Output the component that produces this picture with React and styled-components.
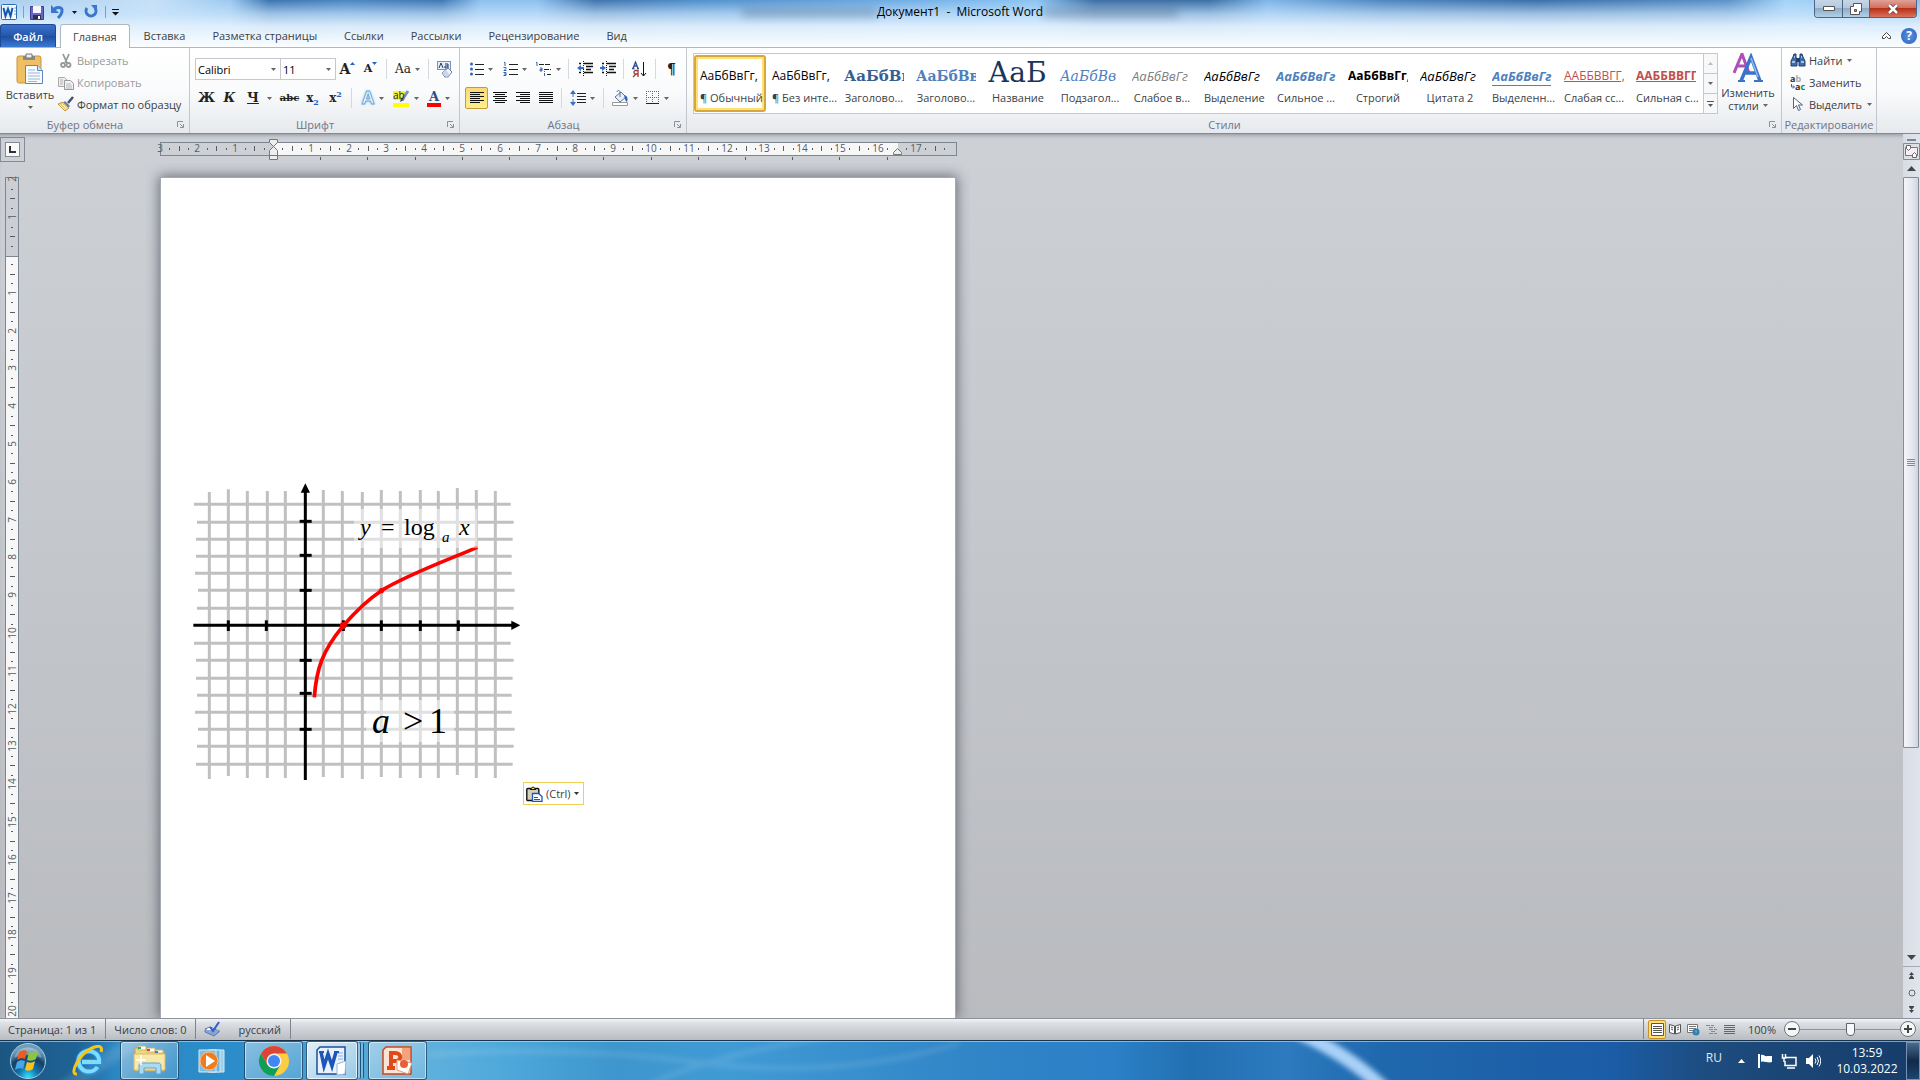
import React from "react";
import styled, { createGlobalStyle, css } from "styled-components";

const tabs = [
  "Вставка",
  "Разметка страницы",
  "Ссылки",
  "Рассылки",
  "Рецензирование",
  "Вид",
];

const styles = [
  { label: "¶ Обычный", sample: "АаБбВвГг,", active: true },
  { label: "¶ Без инте...", sample: "АаБбВвГг," },
  { label: "Заголово...", sample: "АаБбВв", serif: true, bold: true, color: "#365f91", size: 15 },
  { label: "Заголово...", sample: "АаБбВв", serif: true, bold: true, color: "#4f81bd", size: 14 },
  { label: "Название", sample: "АаБ", serif: true, color: "#17365d", size: 28 },
  { label: "Подзагол...", sample: "АаБбВв", serif: true, italic: true, color: "#4f81bd", size: 14 },
  { label: "Слабое в...", sample: "АаБбВвГг", italic: true, color: "#808080", size: 13 },
  { label: "Выделение", sample: "АаБбВвГг", italic: true, size: 13 },
  { label: "Сильное ...", sample: "АаБбВвГг", italic: true, bold: true, color: "#4f81bd", size: 13 },
  { label: "Строгий", sample: "АаБбВвГг,", bold: true },
  { label: "Цитата 2", sample: "АаБбВвГг", italic: true, size: 13 },
  { label: "Выделенн...", sample: "АаБбВвГг", italic: true, bold: true, color: "#4f81bd", size: 13, line: true },
  { label: "Слабая сс...", sample: "ААББВВГГ,", color: "#c0504d", underline: true },
  { label: "Сильная с...", sample: "ААББВВГГ,", color: "#c0504d", bold: true, underline: true },
];

const CM = 37.8;

/* ---------- icons ---------- */

const Icon = ({ w = 16, h = 16, children }) => (
  <svg width={w} height={h} viewBox={`0 0 ${w} ${h}`} aria-hidden="true">
    {children}
  </svg>
);

const Arrow = ({ color = "#666" }) => (
  <Icon w={5} h={3}>
    <path d="M0 0h5L2.500 3z" fill={color} />
  </Icon>
);

const WordBadge = () => (
  <Icon>
    <rect x=".5" y=".5" width="15" height="15" rx="1" fill="#fff" stroke="#2a6bb5" />
    <path d="M2 2h10v12H2z" fill="#e3effb" />
    <path d="M2.500 4l2 8 2.500-7 2.500 7 2-8" fill="none" stroke="#1258b0" strokeWidth="2" />
    <path d="M13 4h2M13 7h2M13 10h2" stroke="#6fa5de" />
  </Icon>
);

const SaveIcon = () => (
  <Icon w={14} h={15}>
    <path d="M.5 1.500h13v13H.5z" fill="#6a66c4" stroke="#3e3a8c" />
    <path d="M3 1h8v7H3z" fill="#f4f6fd" />
    <path d="M3 10h8v4H3z" fill="#2f2f4f" />
    <path d="M8 11h2v3H8z" fill="#fff" />
  </Icon>
);

const UndoIcon = () => (
  <Icon>
    <path d="M4 6c2-4 9-3 8 1 0 3-2 5-4 7" fill="none" stroke="#3a76cc" strokeWidth="3" />
    <path d="M1 1v8h8z" fill="#3a76cc" />
  </Icon>
);

const RedoIcon = () => (
  <Icon>
    <path d="M4 4a5 5 0 1 0 8 0" fill="none" stroke="#3a76cc" strokeWidth="3" />
    <path d="M8 1h6v7z" fill="#3a76cc" />
  </Icon>
);

const PasteIcon = () => (
  <Icon w={28} h={32}>
    <rect x="1" y="3" width="24" height="27" rx="2" fill="#efbf63" stroke="#c9953c" />
    <path d="M7 3h12v4H7z" fill="#8a8a8a" />
    <path d="M10 1h6v4h-6z" fill="#eee" stroke="#777" />
    <path d="M9.500 12.500h12l5 5v13h-17z" fill="#f7fbff" stroke="#5f87b8" />
    <path d="M21.500 12.500v5h5" fill="#d5e3f3" stroke="#5f87b8" />
    <path d="M12 17h7M12 20h12M12 23h12M12 26h12M12 28.500h9" stroke="#9db6d4" />
  </Icon>
);

const CutIcon = () => (
  <Icon>
    <path d="M5 1l4 9M11 1L7 10" stroke="#999" strokeWidth="1.800" />
    <circle cx="5" cy="12" r="2" fill="none" stroke="#999" strokeWidth="1.800" />
    <circle cx="10.500" cy="12" r="2" fill="none" stroke="#999" strokeWidth="1.800" />
  </Icon>
);

const CopyIcon = () => (
  <Icon>
    <path d="M.5 2.500h6l3 3v6h-9z" fill="#eee" stroke="#aaa" />
    <path d="M6.500 5.500h6l3 3v6h-9z" fill="#f4f4f4" stroke="#999" />
    <path d="M2 5h3M2 7h3M2 9h3M8 9h5M8 11h6M8 13h6" stroke="#b5b5b5" />
  </Icon>
);

const BrushIcon = () => (
  <Icon>
    <path d="M15 1l-5 6" stroke="#44506e" strokeWidth="2.500" />
    <path d="M7 5l5 5-2 2-5-5z" fill="#6b7ba5" />
    <path d="M0 8l5-2 6 6-4 3z" fill="#f2cf6b" stroke="#b58a2d" strokeWidth=".8" />
    <path d="M2 9l5 5M4 8l5 5" stroke="#fff3c4" />
  </Icon>
);

const LauncherIcon = () => (
  <Icon w={7} h={7}>
    <path d="M.5 6V.5H6" fill="none" stroke="#8b9099" />
    <path d="M3 3l3 3M6.500 3v3.500H3" fill="none" stroke="#8b9099" />
  </Icon>
);

const EraserIcon = () => (
  <Icon w={18} h={18}>
    <rect x="1.500" y="1.500" width="13" height="8" fill="#e6eef9" stroke="#7a93b8" />
    <path d="M3 8l2-5 2 5M9 4h3v4H9V6h3" fill="none" stroke="#22396b" />
    <path d="M6 13l6-5 4 4-4 5H9z" fill="#f1f5fb" stroke="#6d83a5" />
    <path d="M6 13l4-3 3 4-2 3" fill="#c9d6ea" />
  </Icon>
);

const MarkerIcon = () => (
  <Icon w={17} h={17}>
    <path d="M0 1h12v9H0z" fill="#f6ef3a" />
    <path d="M15 1l-6 9" stroke="#7b93bb" strokeWidth="3" />
    <path d="M8 8l3 2-4 2z" fill="#3b4a68" />
    <path d="M0 13h16v4H0z" fill="#ff0" />
    <text x="0" y="9" fontSize="10" fontFamily="Open Sans, sans-serif" fill="#222">ab</text>
  </Icon>
);

const Bullets = () => (
  <Icon w={14} h={14}>
    <path d="M5 2.500h9M5 7.500h9M5 12.500h9" stroke="#222" />
    <circle cx="1.500" cy="2" r="1.500" fill="#3561b5" />
    <circle cx="1.500" cy="7" r="1.500" fill="#3561b5" />
    <circle cx="1.500" cy="12" r="1.500" fill="#3561b5" />
  </Icon>
);

const Numbers = () => (
  <Icon w={15} h={16}>
    <path d="M6 3.500h9M6 8.500h9M6 13.500h9" stroke="#222" />
    <path d="M1 1.500h1V5M.5 6.500H3v1L1 9.500h2.500M.5 11.500H3v3H.5M1 13h2" fill="none" stroke="#3561b5" />
  </Icon>
);

const MultiLevel = () => (
  <Icon w={17} h={16}>
    <path d="M4 3.500h12M9 8.500h7M12 13.500h4" stroke="#222" strokeDasharray="5 1" />
    <path d="M1 1.500h1V5M5 7h2v3H5V8.500h2M9.500 12v3M9.500 10v1" fill="none" stroke="#3561b5" />
  </Icon>
);

const Indent = ({ out }) => (
  <Icon>
    <path d="M7 2.500h9M9 5.500h7M9 8.500h5M7 11.500h9M2 2.500h2M2 11.500h2" stroke="#111" strokeWidth="1.500" />
    <path d="M6.500 0v16" stroke="#111" strokeDasharray="1 1" />
    <path d={out ? "M0 7l4-3v2h3v2H4v2z" : "M6 7L2 4v2H0v2h2v2z"} fill="#3a6cc8" />
  </Icon>
);

const SortIcon = () => (
  <Icon w={15} h={17}>
    <path d="M1 7.500L3.500 1 6 7.500M2 5h3M0 7.500h2.500M5 7.500h2" fill="none" stroke="#2d4f95" strokeWidth="1.300" />
    <path d="M6 16V9.500H3a2 2 0 0 0 0 3.500h3M4 13l-3 3" fill="none" stroke="#9c3a34" strokeWidth="1.300" />
    <path d="M11.500 1v14M9 12l2.500 3 2.500-3" fill="none" stroke="#111" />
  </Icon>
);

const AlignIcon = ({ short }) => {
  const edges = { left: [0, 10], center: [2, 12], right: [4, 14], full: [0, 14] }[short];
  return (
    <Icon w={14} h={12}>
      <path d="M0 .5h14M0 4.500h14M0 8.500h14" stroke="#111" />
      <path
        d={`M${edges[0]} 2.500H${edges[1]}M${edges[0]} 6.500H${edges[1]}M${edges[0]} 10.500H${edges[1]}`}
        stroke="#111"
      />
    </Icon>
  );
};

const SpacingIcon = () => (
  <Icon>
    <path d="M7 3.500h9M7 6.500h9M7 9.500h9M7 12.500h9" stroke="#222" />
    <path d="M3 0l3 4H0zM3 16l3-4H0z" fill="#3a6cc8" />
    <path d="M3 3v10" stroke="#3a6cc8" strokeDasharray="4 2" />
  </Icon>
);

const BucketIcon = () => (
  <Icon w={17} h={16}>
    <path d="M3 7l6-5 5 5-6 5z" fill="#e8eef8" stroke="#5f7396" />
    <path d="M8 7V2c0-2-3-2-3 0" fill="none" stroke="#5f7396" />
    <path d="M12 5c4 1 4 4 3 7-2-1-2-3-3-7z" fill="#2e67b5" />
    <path d="M.5 12.500h15v3H.5z" fill="#fff" stroke="#999" />
  </Icon>
);

const BordersIcon = () => (
  <Icon w={14} h={14}>
    <path d="M.5 0v12M6.500 0v12M12.500 0v12M0 .5h13M0 6.500h13" stroke="#666" strokeDasharray="1 1" />
    <path d="M0 12.500h13" stroke="#222" />
  </Icon>
);

const ChangeStylesIcon = () => (
  <Icon w={30} h={30}>
    <path d="M1 20L9 1l7 19M5 13h8" fill="none" stroke="#ad4eb9" strokeWidth="3" />
    <path d="M8 28L18 4l9 24M12 20h12" fill="none" stroke="#3973ca" strokeWidth="3.500" />
    <path d="M5 28h7M21 28h9" stroke="#3973ca" strokeWidth="2" />
    <path d="M18 5l7 19" stroke="#91b9f2" strokeWidth="1.500" />
  </Icon>
);

const FindIcon = () => (
  <Icon>
    <path d="M3 4l1-3h2v3l1 3v6H1V8zM13 4l-1-3h-2v3L9 7v6h6V8z" fill="#3d6eb0" stroke="#233f6e" />
    <path d="M6 5h4v4H6z" fill="#233f6e" />
    <path d="M2 9h3M11 9h3M4 4h1M11 4h1" stroke="#c7dbf4" strokeWidth="1.500" />
  </Icon>
);

const ReplaceIcon = () => (
  <Icon>
    <text x="0" y="7" fontSize="9" fontWeight="700" fontFamily="Open Sans, sans-serif" fill="#333">
      a<tspan fill="#aaa">b</tspan>
    </text>
    <text x="5" y="15" fontSize="9" fontWeight="700" fontFamily="Open Sans, sans-serif" fill="#333">
      a<tspan fill="#1b8a2b">c</tspan>
    </text>
    <path d="M1.500 9v3H4M3 10.500L4.500 12 3 13.500" fill="none" stroke="#3561b5" />
  </Icon>
);

const SelectIcon = () => (
  <Icon>
    <path d="M3.500 1.500v11l3-3 2 5 2-1-2-4.500h4z" fill="#fff" stroke="#4a6286" />
  </Icon>
);

const ClipSmallIcon = () => (
  <Icon w={17} h={16}>
    <rect x=".8" y="2.500" width="12" height="12" rx="1" fill="#d8d0bb" stroke="#111" strokeWidth="1.400" />
    <path d="M4 3.500L7 .8l3 2.700z" fill="#ffd94a" stroke="#111" />
    <path d="M6.500 7.500h6l3.500 3v5H6.500z" fill="#fff" stroke="#1b56c9" strokeWidth="1.300" />
    <path d="M8 11.500h4M8 13.500h6" stroke="#1b56c9" />
  </Icon>
);

const ProofIcon = () => (
  <Icon w={17} h={16}>
    <path d="M1 8l5-2 9 4-5 4z" fill="#fff" stroke="#5d78b5" />
    <path d="M1 9v2l9 4 5-4v-2" fill="#8da3d3" stroke="#5d78b5" />
    <path d="M6 6l3 4 6-9" fill="none" stroke="#2d62c4" strokeWidth="2" />
  </Icon>
);

const PageView = () => (
  <Icon w={13} h={13}>
    <path d="M.5.500h12v12H.5z" fill="#fff" stroke="#555" />
    <path d="M2 3.500h9M2 5.500h9M2 7.500h9M2 9.500h9" stroke="#555" />
  </Icon>
);

const ReadView = () => (
  <Icon w={12} h={13}>
    <path d="M.5 1.500L5.500 3v8L.5 9.500zM11.500 1.500L6.500 3v8l5-1.500z" fill="#fff" stroke="#555" />
    <path d="M2 4l2 1M2 6l2 1M10 4L8 5M10 6L8 7" stroke="#555" />
  </Icon>
);

const WebView = () => (
  <Icon w={13} h={13}>
    <path d="M.5 1.500h10v8H.5z" fill="#fff" stroke="#777" />
    <path d="M2 3.500h7M2 5.500h7M2 7.500h4" stroke="#777" />
    <circle cx="9" cy="9" r="3.500" fill="#2c7fb8" />
    <path d="M8 7l2 1-1 3z" fill="#6fc36f" />
  </Icon>
);

const OutlineView = () => (
  <Icon w={11} h={11}>
    <path d="M0 1.500h8M3 3.500h6M3 5.500h8M5 7.500h5M3 9.500h8" stroke="#888" strokeDasharray="4 1" />
  </Icon>
);

const DraftView = () => (
  <Icon w={11} h={11}>
    <path d="M0 1.500h11M0 3.500h11M0 5.500h11M0 7.500h11M0 9.500h11" stroke="#666" />
  </Icon>
);

const StartOrb = () => (
  <Icon w={38} h={38}>
    <defs>
      <radialGradient id="orb" cx="50%" cy="95%" r="80%">
        <stop offset="0" stopColor="#2be3ff" />
        <stop offset=".35" stopColor="#1474ad" />
        <stop offset=".7" stopColor="#123f66" />
        <stop offset="1" stopColor="#6f9dbb" />
      </radialGradient>
    </defs>
    <circle cx="19" cy="19" r="17.500" fill="url(#orb)" stroke="#a9cbe2" />
    <path d="M5 16a14.500 14.500 0 0 1 28 0c-9-4-19-4-28 0z" fill="#fff" opacity=".3" />
    <path d="M10 10c3-2 6-2 8-1l-2 8c-2-1-5-1-8 1z" fill="#ee5a24" />
    <path d="M20 10c3 1 5 1 9-1l-2 8c-3 2-6 2-9 1z" fill="#8cc63f" />
    <path d="M8 20c3-2 5-2 8-1l-2 8c-2-1-5-1-8 1z" fill="#45a8e6" />
    <path d="M18 20c3 1 5 1 8-1l-2 8c-3 2-5 2-8 1z" fill="#fcc21b" />
  </Icon>
);

const IeIcon = () => (
  <Icon w={32} h={32}>
    <path d="M26 22a10.500 10.500 0 1 1 1.500-5H10" fill="none" stroke="#2b93dd" strokeWidth="6" />
    <path d="M25.500 22a10.300 10.300 0 1 1 1.700-5H10" fill="none" stroke="#7fdcfd" strokeWidth="4" />
    <path d="M5 29C-4 30 8 8 20 3c7-3 11-2 9 4" fill="none" stroke="#f5c518" strokeWidth="3" />
  </Icon>
);

const FolderIcon = () => (
  <Icon w={34} h={32}>
    <path d="M2 3h11l2 3h16v20H2z" fill="#f0d786" stroke="#c9a54b" />
    <path d="M5 1h8v4H5zM14 3h8v4h-8zM22 5h8v3h-8z" fill="#fff" stroke="#c9b067" />
    <path d="M5 2h3v2H5z" fill="#2eae4e" />
    <path d="M14 4h3v2h-3z" fill="#d9432f" />
    <path d="M22 6h3v2h-3z" fill="#2e86d9" />
    <path d="M1 9h31v16H1z" fill="#f9e9a9" stroke="#d9ba62" />
    <path d="M6 29v-8c0-2 1-3 3-3h16c2 0 3 1 3 3v8h-5v-6H11v6z" fill="#a8dbf3" stroke="#5aa5cf" />
    <path d="M8 10v10M3 15h10" stroke="#fff" strokeWidth="1.500" />
  </Icon>
);

const PlayerIcon = () => (
  <Icon w={28} h={26}>
    <path d="M12 2h14v22H12z" fill="#9fd0ea" stroke="#cfe9f6" />
    <path d="M10 2h12v22H10z" fill="#6db3dc" stroke="#cfe9f6" />
    <path d="M1 2h17v22H1z" fill="#7fbde2" stroke="#d7ecf8" />
    <circle cx="11" cy="13" r="9" fill="#f07c1c" stroke="#fbc08b" />
    <path d="M8 7l9 6-9 6z" fill="#fff" />
  </Icon>
);

const ChromeIcon = () => (
  <Icon w={32} h={32}>
    <circle cx="16" cy="16" r="15" fill="#ffcd42" />
    <path d="M16 16L9.500 19.800 3 8.500A15 15 0 0 0 16 31l6.500-11.300z" fill="#0f9d58" />
    <path d="M3 8.500A15 15 0 0 1 29 8.500H16l-6.500 11.300z" fill="#db4437" />
    <circle cx="16" cy="16" r="7.500" fill="#f5f5f5" />
    <circle cx="16" cy="16" r="6" fill="#4285f4" />
  </Icon>
);

const WordIcon = () => (
  <Icon w={32} h={32}>
    <path d="M4 2h25v27H1V5z" fill="#e9f1fb" stroke="#1c4f9c" strokeWidth="1.500" />
    <path d="M22 8h5M22 11h5M22 14h5" stroke="#89aee0" />
    <path d="M5 7l3 14 4-12 4 12 4-14" fill="none" stroke="#1b56b8" strokeWidth="3.500" />
    <path d="M3 7h5M18 7h5" stroke="#1b56b8" strokeWidth="2" />
    <path d="M21 19l9-3-1 13-8 1z" fill="#fff" stroke="#9ab5dc" />
  </Icon>
);

const PowerPointIcon = () => (
  <Icon w={32} h={32}>
    <path d="M4 2h25v27H1V5z" fill="#fbe3d6" stroke="#c9471b" strokeWidth="1.500" />
    <path d="M20 3h8v12h-8z" fill="#f3a47e" />
    <path d="M9 23V8h4c7 0 7 8 0 8H9M5 23h8" fill="none" stroke="#df4a16" strokeWidth="4" />
    <path d="M15 15l15 3-4 11-11-4z" fill="#fff" stroke="#e29a7b" />
    <circle cx="22" cy="19" r="4" fill="#e8603a" />
  </Icon>
);

const TrayFlag = () => (
  <Icon>
    <path d="M2 1v14" stroke="#fff" strokeWidth="2" />
    <path d="M4 2c3-1 4 2 6 1h5v6c-3 1-4 0-6 0s-3-1-5 0z" fill="#fff" />
  </Icon>
);

const TrayNetwork = () => (
  <Icon>
    <path d="M5 4.500h10v8H4V8" fill="#20466f" stroke="#fff" strokeWidth="1.500" />
    <path d="M1.500 1v4h3V1M3 5v4M6 15h8" fill="none" stroke="#fff" strokeWidth="1.500" />
  </Icon>
);

const TraySound = () => (
  <Icon>
    <path d="M1 5h3l4-4v14l-4-4H1z" fill="#fff" />
    <path d="M10 5.500q2 2.500 0 5M12 4q3 4 0 8M14 2.500q3.500 5.500 0 11" fill="none" stroke="#fff" />
  </Icon>
);

/* ---------- styled parts ---------- */

const GlobalStyle = createGlobalStyle`
  * {
    box-sizing: border-box;
  }
  body {
    margin: 0;
    font-family: "Open Sans", "Noto Sans", sans-serif;
    font-size: 11px;
    color: #3b3f46;
  }
  button, select, input {
    font: inherit;
    color: inherit;
    margin: 0;
    padding: 0;
    border: 0;
    background: none;
  }
  svg {
    display: block;
    flex: none;
  }
`;

const Window = styled.div`
  display: flex;
  flex-direction: column;
  height: 100vh;
  overflow: hidden;
`;

const Top = styled.header`
  background: linear-gradient(
      to bottom,
      rgba(214, 234, 252, 0) 0,
      rgba(200, 228, 252, 0.7) 14px,
      rgba(225, 240, 253, 0.95) 26px,
      #fbfdff 47px
    ),
    linear-gradient(
      to right,
      #a9cdee 0%,
      #c6e0f6 8%,
      #9cc9f0 12%,
      #3b75b0 14%,
      #4a86c4 18%,
      #3f78b4 23%,
      #8cc0ee 25%,
      #8cc0ee 28%,
      #3f74ac 31%,
      #4f8ecb 36%,
      #69a8e2 45%,
      #8cc4f3 54%,
      #3c70a6 57%,
      #3c70a6 63%,
      #7fb6e8 66%,
      #4f86bf 72%,
      #3a6fa8 80%,
      #5c92c8 90%,
      #a3d3f8 93%,
      #8fc0ea 100%
    );
`;

const TitleBar = styled.div`
  display: grid;
  grid-template-columns: 1fr auto 1fr;
  height: 24px;
`;

const QuickAccess = styled.div`
  display: flex;
  align-items: center;
  gap: 6px;
  padding: 0 1px;
`;

const Divider = styled.span`
  width: 1px;
  height: 12px;
  background: #8d9bac;
`;

const IconButton = styled.button`
  display: flex;
  align-items: center;
  justify-content: center;
`;

const Title = styled.h1`
  position: relative;
  margin: 0;
  font-size: 12px;
  font-weight: 400;
  line-height: 24px;
  white-space: pre;
  color: #000;
  &::before,
  &::after {
    content: "";
    position: absolute;
    top: 8px;
    width: 135px;
    height: 9px;
    background: rgba(70, 95, 125, 0.35);
    filter: blur(4px);
  }
  &::before {
    right: 100%;
  }
  &::after {
    left: 100%;
  }
`;

const WindowButtons = styled.div`
  display: flex;
  justify-self: end;
  align-self: start;
  height: 18px;
  margin-right: 3px;
  border: 1px solid #4a6585;
  border-top: 0;
  border-radius: 0 0 4px 4px;
  overflow: hidden;
`;

const WindowButton = styled.button`
  display: flex;
  align-items: center;
  justify-content: center;
  width: ${(props) => (props.$close ? 47 : 27)}px;
  background: ${(props) =>
    props.$close
      ? "linear-gradient(#e0a196, #cf6a58 50%, #b8301a 50%, #d9735c)"
      : "linear-gradient(#c5d6e6, #b4c8dc 50%, #8fabc6 50%, #b3d0e8)"};
  & + & {
    border-left: 1px solid #4a6585;
  }
`;

const TabRow = styled.nav`
  display: flex;
  align-items: flex-end;
  height: 24px;
  border-bottom: 1px solid #b1b7c0;
`;

const Tab = styled.button`
  height: 23px;
  padding: 0 14px 0 13px;
  ${(props) =>
    props.$active &&
    css`
      height: 24px;
      margin: 0 1px -1px 4px;
      padding: 0 12px;
      border: 1px solid #b1b7c0;
      border-bottom: 0;
      border-radius: 3px 3px 0 0;
      background: #fff;
    `}
  ${(props) =>
    props.$file &&
    css`
      width: 56px;
      padding: 0;
      border: 1px solid #1c4a94;
      border-bottom: 0;
      border-radius: 3px 3px 0 0;
      background: linear-gradient(#3b72cd, #2557a8 50%, #1d4c9c 50%, #3a7ad4);
      color: #fff;
      font-weight: 600;
    `}
`;

const TabTools = styled.div`
  display: flex;
  align-items: center;
  gap: 10px;
  height: 23px;
  margin-left: auto;
  padding-right: 3px;
`;

const Help = styled.button`
  width: 16px;
  height: 16px;
  border-radius: 50%;
  background: radial-gradient(#5a92e4, #2b5fb8);
  color: #fff;
  font-size: 12px;
  font-weight: 700;
  line-height: 16px;
`;

const Ribbon = styled.section`
  display: flex;
  height: 86px;
  border-bottom: 1px solid #84888f;
  background: linear-gradient(#fff, #fafbfc 50%, #e6e9ed);
`;

const Group = styled.section`
  display: flex;
  flex-direction: column;
  width: ${(props) => props.$w}px;
  border-right: 1px solid #c3c7cd;
`;

const GroupBody = styled.div`
  display: flex;
  flex: 1;
  min-height: 0;
  padding: 0 5px;
`;

const GroupFooter = styled.footer`
  display: flex;
  align-items: center;
  height: 18px;
  padding-right: ${(props) => (props.$launcher ? 5 : 0)}px;
  color: #6d7583;
  span {
    flex: 1;
    padding-right: ${(props) => (props.$launcher ? 7 : 0)}px;
    text-align: center;
    white-space: nowrap;
  }
`;

const BigButton = styled.button`
  flex: none;
  display: flex;
  flex-direction: column;
  align-items: center;
  width: ${(props) => props.$w}px;
  padding-top: 5px;
  line-height: 13px;
  svg + span {
    margin-top: 3px;
  }
  > span + svg {
    margin-top: 5px;
  }
`;

const Inline = styled.span`
  display: flex;
  align-items: center;
  gap: 4px;
`;

const Stack = styled.div`
  display: flex;
  flex-direction: column;
  padding: 2px 0 0 3px;
`;

const SmallButton = styled.button`
  display: flex;
  align-items: center;
  gap: 3px;
  height: 22px;
  white-space: nowrap;
  color: ${(props) => (props.disabled ? "#9a9a9a" : "#3b3f46")};
  > span + svg {
    margin-left: 2px;
  }
`;

const Rows = styled.div`
  display: flex;
  flex-direction: column;
  gap: 7px;
  padding-top: 10px;
`;

const Row = styled.div`
  display: flex;
  align-items: center;
  height: 22px;
`;

const Combo = styled.label`
  display: flex;
  align-items: center;
  width: ${(props) => props.$w}px;
  height: 22px;
  padding: 0 4px 0 2px;
  border: 1px solid #c5c9cf;
  background: #fff;
  color: #000;
  & + & {
    border-left: 0;
  }
  select {
    flex: 1;
    min-width: 0;
    appearance: none;
    outline: 0;
  }
`;

const Tool = styled.button`
  flex: none;
  display: flex;
  align-items: center;
  justify-content: center;
  width: ${(props) => (props.$wide ? 37 : props.$split ? 33 : 23)}px;
  height: 22px;
  gap: ${(props) => (props.$wide ? 8 : 4)}px;
  color: #222;
  ${(props) =>
    props.$active &&
    css`
      border: 1px solid #c29b3c;
      border-radius: 2px;
      background: linear-gradient(#fbd977, #fee57c 50%, #fdf08b);
    `}
`;

const Separator = styled.span`
  width: 1px;
  height: 20px;
  margin: 0 4px;
  background: #d5d8dc;
`;

const Glyph = styled.span`
  font-family: "DejaVu Serif", serif;
  font-size: ${(props) => props.$size || 13}px;
  font-weight: ${(props) => (props.$light ? 400 : 700)};
  font-style: ${(props) => (props.$italic ? "italic" : "normal")};
  text-decoration: ${(props) => props.$line || "none"};
  color: ${(props) => props.$color || "#222"};
  line-height: 16px;
  sub,
  sup {
    font-size: 8px;
    line-height: 0;
    color: #2d5fb8;
  }
`;

const Caret = styled.span`
  align-self: flex-start;
  margin: 4px 0 0 -4px;
`;

const ColorGlyph = styled(Glyph)`
  border-bottom: 4px solid #f00;
  padding: 0 2px;
  line-height: 13px;
`;

const OutlineGlyph = styled.span`
  font-family: "Liberation Sans", Arial, sans-serif;
  font-size: 18px;
  line-height: 20px;
  font-weight: 700;
  color: #fff;
  -webkit-text-stroke: 1px #6aa6d8;
  text-shadow: 0 0 3px #7cc0ee;
`;

const Gallery = styled.div`
  display: flex;
  flex: 1;
  min-width: 0;
  height: 61px;
  margin: 5px 2px 0 1px;
  border: 1px solid #c5c9cf;
  background: #fff;
`;

const GalleryItems = styled.div`
  display: flex;
  flex: 1;
  min-width: 0;
  overflow: hidden;
`;

const StyleCard = styled.button`
  flex: none;
  display: flex;
  flex-direction: column;
  width: 72px;
  margin: 1px 0;
  padding: 3px 4px;
  border: 2px solid transparent;
  border-radius: 3px;
  ${(props) =>
    props.$active &&
    css`
      border-color: #d9a63c;
      box-shadow: inset 0 0 0 2px #fee278;
    `}
`;

const Sample = styled.span`
  display: block;
  width: 100%;
  height: 30px;
  overflow: hidden;
  text-align: left;
  white-space: nowrap;
  line-height: ${(props) => (props.$size > 20 ? 26 : 32)}px;
  font-family: ${(props) =>
    props.$serif ? '"DejaVu Serif", serif' : '"Open Sans", sans-serif'};
  font-size: ${(props) => props.$size || 12}px;
  font-weight: ${(props) => (props.$bold ? 700 : 400)};
  font-style: ${(props) => (props.$italic ? "italic" : "normal")};
  color: ${(props) => props.$color || "#000"};
  text-decoration: ${(props) => (props.$underline ? "underline" : "none")};
  span {
    border-bottom: ${(props) => (props.$line ? "1px solid #4f81bd" : "0")};
  }
`;

const StyleLabel = styled.span`
  width: 100%;
  text-align: center;
  white-space: nowrap;
  line-height: 15px;
`;

const GalleryArrows = styled.div`
  display: flex;
  flex: none;
  flex-direction: column;
  width: 14px;
  border-left: 1px solid #c5c9cf;
  button {
    display: flex;
    flex: 1;
    align-items: center;
    justify-content: center;
    background: #f7f8f9;
  }
  button + button {
    border-top: 1px solid #c5c9cf;
  }
`;

const Workspace = styled.main`
  display: flex;
  flex: 1;
  min-height: 0;
  background: linear-gradient(#cdd0d5, #c4c7cc 45%, #b9bbbf);
  box-shadow: inset 0 4px 4px -3px #8d9198;
`;

const Left = styled.div`
  display: flex;
  flex: none;
  flex-direction: column;
  width: 25px;
`;

const TabStop = styled.button`
  display: flex;
  flex: none;
  align-items: center;
  justify-content: center;
  height: 25px;
  margin: 3px 0 15px;
  border: 1px solid #858b94;
  span {
    display: flex;
    align-items: center;
    justify-content: center;
    width: 15px;
    height: 15px;
    border: 1px solid #858b94;
    background: #fafafa;
  }
`;

const VerticalRuler = styled.div`
  flex: 1;
  min-height: 0;
  width: 14px;
  margin-left: 5px;
  border: 1px solid #7d8590;
  border-bottom: 0;
  background: linear-gradient(#cbced3 78px, #7d8590 78px, #7d8590 79px, #f7f7f8 79px);
  svg {
    overflow: visible;
  }
`;

const Canvas = styled.div`
  flex: 1;
  min-width: 0;
  display: flex;
  flex-direction: column;
  padding-left: 135px;
`;

const Ruler = styled.div`
  flex: none;
  width: 797px;
  height: 14px;
  margin: 8px 0 21px;
  border: 1px solid #7d8590;
  background: linear-gradient(
    to right,
    transparent 112px,
    #f7f7f8 112px,
    #f7f7f8 737px,
    transparent 737px
  );
  svg {
    overflow: visible;
    margin: -1px;
  }
`;

const Page = styled.article`
  position: relative;
  flex: 1;
  min-height: 0;
  width: 796px;
  padding: 302px 0 0 29px;
  border: 1px solid #a4aab5;
  border-bottom: 0;
  background: #fff;
  box-shadow: 0 0 12px 1px rgba(60, 65, 75, 0.7);
  clip-path: inset(-14px -14px 0 -14px);
`;

const PasteOptions = styled.button`
  position: absolute;
  left: 362px;
  top: 604px;
  display: flex;
  align-items: center;
  gap: 3px;
  width: 61px;
  height: 23px;
  padding: 0 2px;
  border: 1px solid #efcf55;
  background: #fff;
`;

const ScrollBar = styled.aside`
  display: flex;
  flex: none;
  flex-direction: column;
  align-items: center;
  width: 17px;
  padding-top: 5px;
  background: linear-gradient(to right, #d8dce4, #e0e4ec);
  button {
    display: flex;
    flex: none;
    align-items: center;
    justify-content: center;
    width: 17px;
    height: 17px;
  }
`;

const SplitHandle = styled.span`
  flex: none;
  width: 9px;
  height: 2px;
  margin-bottom: 2px;
  background: #80858d;
`;

const Track = styled.div`
  flex: 1;
  width: 100%;
`;

const Thumb = styled.div`
  display: flex;
  align-items: center;
  justify-content: center;
  width: 16px;
  height: 74%;
  border: 1px solid #868c95;
  border-radius: 1px;
  background: linear-gradient(to right, #f3f5f9, #e4e7ee 60%, #cfd4dd);
`;

const BrowseButtons = styled.div`
  border-top: 1px solid #a5abb5;
`;

const StatusBar = styled.footer`
  display: flex;
  flex: none;
  align-items: flex-start;
  height: 22px;
  border-top: 1px solid #8e939b;
  background: linear-gradient(#f2f4f7, #dcdfe4 20%, #b9bdc2);
`;

const StatusItem = styled.button`
  display: flex;
  align-items: center;
  gap: 17px;
  height: 20px;
  padding: 0 9px 0 8px;
  border-right: 1px solid #7f848b;
`;

const ViewControls = styled.div`
  display: flex;
  align-items: center;
  height: 20px;
  margin-left: auto;
  padding-left: 4px;
  padding-right: 4px;
  border-left: 1px solid #7f848b;
`;

const ViewButton = styled.button`
  display: flex;
  align-items: center;
  justify-content: center;
  width: 18px;
  height: 19px;
  ${(props) =>
    props.$active &&
    css`
      border: 1px solid #c58f2c;
      border-radius: 2px;
      background: #fde27c;
    `}
`;

const ZoomText = styled.button`
  padding: 0 8px 0 10px;
`;

const ZoomButton = styled.button`
  display: flex;
  align-items: center;
  justify-content: center;
  width: 16px;
  height: 16px;
  border: 1px solid #6f757e;
  border-radius: 50%;
  background: #f5f6f8;
`;

const ZoomRange = styled.input`
  appearance: none;
  width: 100px;
  height: 14px;
  background: linear-gradient(#8f959e, #8f959e) center / 100% 1px no-repeat;
  &::-webkit-slider-thumb {
    appearance: none;
    width: 9px;
    height: 13px;
    background: #f8f9fa;
    border: 1px solid #5f656e;
    border-radius: 1px 1px 5px 5px;
  }
`;

const Taskbar = styled.footer`
  position: relative;
  display: flex;
  flex: none;
  align-items: center;
  height: 40px;
  border-top: 1px solid #18354f;
  box-shadow: inset 0 1px 0 rgba(200, 225, 245, 0.6);
  color: #fff;
  background: linear-gradient(
    to right,
    #1b5681 0%,
    #1e6396 4%,
    #2b87c3 6%,
    #2c8ecb 13%,
    #4da3d3 17%,
    #60b1dc 22%,
    #4fa9db 26%,
    #3d96cd 32%,
    #409bd5 38%,
    #3186c7 50%,
    #2b80c7 58%,
    #2270b2 62%,
    #2d7abf 67%,
    #1f68ad 72%,
    #1b5ca6 84%,
    #1d4c7e 89%,
    #163c69 100%
  );
`;

const Streaks = styled.svg`
  position: absolute;
  inset: 0;
  width: 100%;
  height: 100%;
  pointer-events: none;
`;

const TaskButton = styled.button`
  position: relative;
  display: flex;
  align-items: center;
  justify-content: center;
  width: 62px;
  height: 39px;
  ${(props) =>
    props.$open &&
    css`
      width: 59px;
      margin: 0 2px 0 1px;
      border: 1px solid rgba(20, 60, 95, 0.8);
      border-radius: 3px;
      background: linear-gradient(135deg, rgba(255, 255, 255, 0.45), rgba(255, 255, 255, 0.1));
      box-shadow: inset 0 0 0 1px rgba(255, 255, 255, 0.5);
    `}
  ${(props) =>
    props.$stacked &&
    css`
      width: 52px;
      margin-right: 9px;
      background: linear-gradient(135deg, rgba(255, 255, 255, 0.85), rgba(255, 255, 255, 0.4));
      box-shadow: inset 0 0 0 1px rgba(255, 255, 255, 0.7), 3px 0 0 -1px #8fc5e3,
        4px 0 0 -1px #1d5580, 7px 0 0 -2px #7db9dc, 8px 0 0 -2px #1d5580;
    `}
`;

const Start = styled(TaskButton)`
  width: 57px;
  padding-right: 2px;
`;

const Tray = styled.div`
  position: relative;
  display: flex;
  align-items: center;
  gap: 8px;
  height: 39px;
  margin-left: auto;
`;

const Language = styled.button`
  align-self: flex-start;
  margin: 9px 8px 0 0;
  font-size: 12px;
  line-height: 16px;
  color: #dfe9f3;
`;

const TrayIcons = styled.div`
  display: flex;
  gap: 8px;
  margin: 0 7px 0 4px;
`;

const Clock = styled.time`
  width: 62px;
  text-align: center;
  font-size: 12px;
  line-height: 16px;
`;

const ShowDesktop = styled.button`
  width: 14px;
  height: 38px;
  border: 1px solid #7993ae;
  background: linear-gradient(#486a8e, #10294a 50%, #1c4570);
`;

/* ---------- rulers and picture ---------- */

const HorizontalScale = () => {
  const zero = 113;
  const marks = [];
  for (let q = -11; q <= 71; q++) {
    if (q === 0 || q === 66) continue;
    const x = Math.round(zero + (q * CM) / 4);
    if (q % 4 === 0) {
      marks.push(
        <text key={q} x={x} y="10" textAnchor="middle">
          {Math.abs(q / 4)}
        </text>
      );
    } else {
      marks.push(
        q % 2 === 0 ? (
          <rect key={q} x={x} y="4" width="1" height="5" />
        ) : (
          <rect key={q} x={x} y="6" width="1" height="2" />
        )
      );
    }
  }
  const stops = Array.from({ length: 13 }, (_, i) => Math.round(zero + (i + 1) * 47.2));
  return (
    <svg width="797" height="14" fontSize="10" fill="#555b63">
      <text x="0" y="10" textAnchor="middle">3</text>
      {marks}
      {stops.map((x) => (
        <rect key={x} x={x} y="15" width="1" height="3" />
      ))}
      <path d="M109.500-2.500h8v3l-4 4 4 4v9h-8v-9l4-4-4-4z" fill="#eee" stroke="#777" />
      <path d="M109.500 13.500h8" stroke="#777" />
      <path d="M733.500 12.500v-2l4-4 4 4v2z" fill="#eee" stroke="#777" />
    </svg>
  );
};

const VerticalScale = () => {
  const zero = 77;
  const marks = [];
  for (let q = -8; q <= 80; q++) {
    if (q === 0) continue;
    const y = Math.round(zero + (q * CM) / 4);
    if (q % 4 === 0) {
      marks.push(
        <text key={q} transform={`translate(10 ${y}) rotate(-90)`} textAnchor="middle">
          {Math.abs(q / 4)}
        </text>
      );
    } else {
      marks.push(
        q % 2 === 0 ? (
          <rect key={q} x="4" y={y} width="5" height="1" />
        ) : (
          <rect key={q} x="5" y={y} width="2" height="1" />
        )
      );
    }
  }
  return (
    <svg width="12" height="840" fontSize="10" fill="#555b63">
      {marks}
    </svg>
  );
};

// x, top, bottom
const columns = [
  [88, 66, 927], [145, 58, 918], [202, 63, 924], [262, 63, 924], [316, 63, 924],
  [430, 60, 921], [487, 63, 924], [547, 66, 927], [604, 60, 921], [661, 63, 924],
  [721, 60, 924], [775, 63, 924], [832, 54, 915], [889, 60, 924], [946, 63, 924],
];

// y, left, right
const lines = [
  [103, 42, 992], [157, 51, 1001], [208, 48, 998], [259, 48, 995], [310, 45, 995],
  [361, 54, 1004], [415, 51, 1001], [520, 42, 992], [571, 48, 1001], [625, 48, 998],
  [676, 51, 995], [727, 45, 995], [778, 54, 1004], [829, 51, 1001], [883, 48, 998],
];

const LogGraph = () => (
  <svg width="335" height="305" viewBox="10 10 335 305" role="img" aria-label="График логарифма">
    <g transform="scale(0.33333)" fill="none">
      <g stroke="#c0c0c0" strokeWidth="9">
        {columns.map(([x, top, bottom]) => (
          <path key={x} d={`M${x} ${top}V${bottom}`} />
        ))}
        {lines.map(([y, left, right]) => (
          <path key={y} d={`M${left} ${y}H${right}`} />
        ))}
      </g>
      <g stroke="#000" strokeWidth="9">
        <path d="M40 466H1000M376 60V930" />
        {[145, 259, 490, 604, 721, 835].map((x) => (
          <path key={x} d={`M${x} 451V483`} />
        ))}
        {[154, 256, 361, 571, 670, 778].map((y) => (
          <path key={y} d={`M359 ${y}H395`} />
        ))}
      </g>
      <path d="M376 40l14 28h-28zM1021 466l-27 14v-28z" fill="#000" />
      <path
        d="M403 682C409 600 425 545 490 467C530 420 565 388 604 362C680 315 790 275 892 232"
        stroke="#f00"
        strokeWidth="11"
      />
      <circle cx="490" cy="466" r="10" fill="#f00" />
      <circle cx="604" cy="362" r="8" fill="#f00" />
      <path d="M522 117h370v117H522zM558 690h264v126H558z" fill="#fff" opacity=".5" />
    </g>
    <g fontFamily="Liberation Serif, Times New Roman, serif" fontSize="24" fill="#000">
      <text x="180" y="65" fontStyle="italic">y</text>
      <text x="201" y="65">=</text>
      <text x="224" y="65">log</text>
      <text x="262" y="72" fontSize="15" fontStyle="italic">a</text>
      <text x="279" y="65" fontStyle="italic">x</text>
      <text x="192" y="263" fontSize="36" fontStyle="italic">a</text>
      <text x="223" y="263" fontSize="36">&gt;</text>
      <text x="249" y="263" fontSize="36">1</text>
    </g>
  </svg>
);

/* ---------- sections ---------- */

const SplitTool = ({ label, wide, children }) => (
  <Tool $split $wide={wide} aria-label={label}>
    {children}
    <Arrow />
  </Tool>
);

const Footer = ({ children, launcher = true }) => (
  <GroupFooter $launcher={launcher}>
    <span>{children}</span>
    {launcher && (
      <IconButton aria-label={children}>
        <LauncherIcon />
      </IconButton>
    )}
  </GroupFooter>
);

const Header = () => (
  <Top>
    <TitleBar>
      <QuickAccess>
        <WordBadge />
        <Divider />
        <IconButton aria-label="Сохранить"><SaveIcon /></IconButton>
        <IconButton aria-label="Отменить"><UndoIcon /></IconButton>
        <Arrow color="#111" />
        <IconButton aria-label="Повторить"><RedoIcon /></IconButton>
        <Divider />
        <IconButton aria-label="Настройка панели">
          <Icon w={7} h={7}>
            <path d="M0 .5h7" stroke="#111" />
            <path d="M0 3h7L3.500 6.500z" fill="#111" />
          </Icon>
        </IconButton>
      </QuickAccess>
      <Title>Документ1  -  Microsoft Word</Title>
      <WindowButtons>
        <WindowButton aria-label="Свернуть">
          <Icon w={12} h={5}>
            <path d="M.5.500h11v4H.5z" fill="#fff" stroke="#555" />
          </Icon>
        </WindowButton>
        <WindowButton aria-label="Восстановить">
          <Icon w={12} h={12}>
            <path d="M3.500.500h8v8h-2v3h-9v-8h3z" fill="#fff" stroke="#555" />
            <path d="M4.500 6.500h2v2h-2z" fill="#8aa" stroke="#555" />
          </Icon>
        </WindowButton>
        <WindowButton $close aria-label="Закрыть">
          <Icon w={12} h={10}>
            <path d="M2 1l8 8M10 1L2 9" stroke="#5b3535" strokeWidth="4" />
            <path d="M2 1l8 8M10 1L2 9" stroke="#fff" strokeWidth="2.500" />
          </Icon>
        </WindowButton>
      </WindowButtons>
    </TitleBar>
    <TabRow>
      <Tab $file>Файл</Tab>
      <Tab $active>Главная</Tab>
      {tabs.map((tab) => (
        <Tab key={tab}>{tab}</Tab>
      ))}
      <TabTools>
        <IconButton aria-label="Свернуть ленту">
          <Icon w={9} h={7}>
            <path d="M.5 4.500l4-4 4 4v2h-2l-2-2-2 2h-2z" fill="#fff" stroke="#444" />
          </Icon>
        </IconButton>
        <Help aria-label="Справка">?</Help>
      </TabTools>
    </TabRow>
  </Top>
);

const ClipboardGroup = () => (
  <Group $w={190}>
    <GroupBody>
      <BigButton $w={50}>
        <PasteIcon />
        <span>Вставить</span>
        <Arrow />
      </BigButton>
      <Stack>
        <SmallButton disabled><CutIcon /><span>Вырезать</span></SmallButton>
        <SmallButton disabled><CopyIcon /><span>Копировать</span></SmallButton>
        <SmallButton><BrushIcon /><span>Формат по образцу</span></SmallButton>
      </Stack>
    </GroupBody>
    <Footer>Буфер обмена</Footer>
  </Group>
);

const FontGroup = () => (
  <Group $w={270}>
    <GroupBody>
      <Rows>
        <Row>
          <Combo $w={86}>
            <select aria-label="Шрифт"><option>Calibri</option></select>
            <Arrow />
          </Combo>
          <Combo $w={55}>
            <select aria-label="Размер шрифта"><option>11</option></select>
            <Arrow />
          </Combo>
          <Tool aria-label="Увеличить размер">
            <Glyph $size={14}>A</Glyph>
            <Caret><Icon w={5} h={3}><path d="M0 3h5L2.500 0z" fill="#2d5fb8" /></Icon></Caret>
          </Tool>
          <Tool aria-label="Уменьшить размер">
            <Glyph $size={11}>A</Glyph>
            <Caret><Arrow color="#2d5fb8" /></Caret>
          </Tool>
          <Separator />
          <SplitTool label="Регистр"><Glyph $size={12} $light>Aa</Glyph></SplitTool>
          <Separator />
          <Tool aria-label="Очистить формат"><EraserIcon /></Tool>
        </Row>
        <Row>
          <Tool><Glyph>Ж</Glyph></Tool>
          <Tool><Glyph $italic>К</Glyph></Tool>
          <SplitTool wide label="Подчеркнутый"><Glyph $line="underline">Ч</Glyph></SplitTool>
          <Tool><Glyph $size={10} $line="line-through">abc</Glyph></Tool>
          <Tool><Glyph $size={12}>x<sub>2</sub></Glyph></Tool>
          <Tool><Glyph $size={12}>x<sup>2</sup></Glyph></Tool>
          <Separator />
          <SplitTool label="Эффекты"><OutlineGlyph>A</OutlineGlyph></SplitTool>
          <SplitTool label="Выделение цветом"><MarkerIcon /></SplitTool>
          <SplitTool label="Цвет текста"><ColorGlyph $color="#2c4d8a">A</ColorGlyph></SplitTool>
        </Row>
      </Rows>
    </GroupBody>
    <Footer>Шрифт</Footer>
  </Group>
);

const ParagraphGroup = () => (
  <Group $w={227}>
    <GroupBody>
      <Rows>
        <Row>
          <SplitTool label="Маркеры"><Bullets /></SplitTool>
          <SplitTool label="Нумерация"><Numbers /></SplitTool>
          <SplitTool label="Многоуровневый список"><MultiLevel /></SplitTool>
          <Separator />
          <Tool aria-label="Уменьшить отступ"><Indent out /></Tool>
          <Tool aria-label="Увеличить отступ"><Indent /></Tool>
          <Separator />
          <Tool aria-label="Сортировка"><SortIcon /></Tool>
          <Separator />
          <Tool><Glyph $size={14}>¶</Glyph></Tool>
        </Row>
        <Row>
          <Tool $active aria-label="По левому краю"><AlignIcon short="left" /></Tool>
          <Tool aria-label="По центру"><AlignIcon short="center" /></Tool>
          <Tool aria-label="По правому краю"><AlignIcon short="right" /></Tool>
          <Tool aria-label="По ширине"><AlignIcon short="full" /></Tool>
          <Separator />
          <SplitTool label="Интервал"><SpacingIcon /></SplitTool>
          <Separator />
          <SplitTool label="Заливка"><BucketIcon /></SplitTool>
          <SplitTool label="Границы"><BordersIcon /></SplitTool>
        </Row>
      </Rows>
    </GroupBody>
    <Footer>Абзац</Footer>
  </Group>
);

const StylesGroup = () => (
  <Group $w={1095}>
    <GroupBody>
      <Gallery>
        <GalleryItems>
          {styles.map((s, i) => (
            <StyleCard key={i} $active={s.active}>
              <Sample
                $serif={s.serif}
                $bold={s.bold}
                $italic={s.italic}
                $color={s.color}
                $size={s.size}
                $underline={s.underline}
                $line={s.line}
              >
                <span>{s.sample}</span>
              </Sample>
              <StyleLabel>{s.label}</StyleLabel>
            </StyleCard>
          ))}
        </GalleryItems>
        <GalleryArrows>
          <button aria-label="Вверх">
            <Icon w={5} h={3}><path d="M0 3h5L2.500 0z" fill="#bbb" /></Icon>
          </button>
          <button aria-label="Вниз"><Arrow /></button>
          <button aria-label="Еще">
            <Icon w={7} h={6}>
              <path d="M0 .5h7" stroke="#555" />
              <path d="M1 3h5L3.500 6z" fill="#555" />
            </Icon>
          </button>
        </GalleryArrows>
      </Gallery>
      <BigButton $w={56}>
        <ChangeStylesIcon />
        <span>Изменить</span>
        <Inline>стили <Arrow /></Inline>
      </BigButton>
    </GroupBody>
    <Footer>Стили</Footer>
  </Group>
);

const EditingGroup = () => (
  <Group $w={95}>
    <GroupBody>
      <Stack>
        <SmallButton><FindIcon /><span>Найти</span><Arrow /></SmallButton>
        <SmallButton><ReplaceIcon /><span>Заменить</span></SmallButton>
        <SmallButton><SelectIcon /><span>Выделить</span><Arrow /></SmallButton>
      </Stack>
    </GroupBody>
    <Footer launcher={false}>Редактирование</Footer>
  </Group>
);

const Scroll = () => (
  <ScrollBar>
    <SplitHandle />
    <button aria-label="Линейка">
      <Icon w={17} h={17}>
        <path d="M.5.500h16v16H.5z" fill="#dde0e5" stroke="#858b94" />
        <path d="M2.500 4.500h12v8h-12z" fill="#f5eef5" stroke="#777" />
        <path d="M3.500 2.500h4v3l-2 2-2-2zM9.500 14.500h4v-3l-2-2-2 2z" fill="#fff" stroke="#666" />
      </Icon>
    </button>
    <button aria-label="Вверх">
      <Icon w={9} h={5}><path d="M0 5h9L4.500 0z" fill="#444" /></Icon>
    </button>
    <Track>
      <Thumb>
        <Icon w={8} h={7}><path d="M0 .5h8M0 2.500h8M0 4.500h8M0 6.500h8" stroke="#858b94" /></Icon>
      </Thumb>
    </Track>
    <button aria-label="Вниз">
      <Icon w={9} h={5}><path d="M0 0h9L4.500 5z" fill="#444" /></Icon>
    </button>
    <BrowseButtons>
      <button aria-label="Предыдущая страница">
        <Icon w={5} h={7}><path d="M0 3h5L2.500 0zM0 6h5L2.500 3zM0 7h5V6H0z" fill="#444" /></Icon>
      </button>
      <button aria-label="Выбор объекта">
        <Icon w={8} h={8}><circle cx="4" cy="4" r="3" fill="none" stroke="#666" /></Icon>
      </button>
      <button aria-label="Следующая страница">
        <Icon w={5} h={7}><path d="M0 1h5L2.500 4zM0 4h5L2.500 7zM0 0h5v1H0z" fill="#444" /></Icon>
      </button>
    </BrowseButtons>
  </ScrollBar>
);

const Status = () => (
  <StatusBar>
    <StatusItem>Страница: 1 из 1</StatusItem>
    <StatusItem>Число слов: 0</StatusItem>
    <StatusItem><ProofIcon />русский</StatusItem>
    <ViewControls>
      <ViewButton $active aria-label="Разметка страницы"><PageView /></ViewButton>
      <ViewButton aria-label="Режим чтения"><ReadView /></ViewButton>
      <ViewButton aria-label="Веб-документ"><WebView /></ViewButton>
      <ViewButton aria-label="Структура"><OutlineView /></ViewButton>
      <ViewButton aria-label="Черновик"><DraftView /></ViewButton>
      <ZoomText>100%</ZoomText>
      <ZoomButton aria-label="Уменьшить">
        <Icon w={8} h={8}><path d="M0 4h8" stroke="#444" strokeWidth="2" /></Icon>
      </ZoomButton>
      <ZoomRange type="range" min="0" max="100" defaultValue="50" aria-label="Масштаб" />
      <ZoomButton aria-label="Увеличить">
        <Icon w={8} h={8}><path d="M0 4h8M4 0v8" stroke="#444" strokeWidth="2" /></Icon>
      </ZoomButton>
    </ViewControls>
  </StatusBar>
);

const Tasks = () => (
  <Taskbar>
    <Streaks viewBox="0 0 1920 40" preserveAspectRatio="none">
      <defs>
        <filter id="soft" x="-20%" y="-20%" width="140%" height="140%">
          <feGaussianBlur stdDeviation="3" />
        </filter>
      </defs>
      <g fill="none" stroke="#fff" filter="url(#soft)">
        <path d="M1300-8Q1350 15 1385 50" stroke="#b8dcff" strokeWidth="14" opacity=".9" />
        <path d="M60 50L150-10" strokeWidth="14" opacity=".12" />
        <path d="M650 44Q720 12 830-4M430 14Q560 4 700 22T960 2" strokeWidth="6" opacity=".1" />
      </g>
    </Streaks>
    <Start aria-label="Пуск"><StartOrb /></Start>
    <TaskButton aria-label="Internet Explorer"><IeIcon /></TaskButton>
    <TaskButton $open aria-label="Проводник"><FolderIcon /></TaskButton>
    <TaskButton aria-label="Проигрыватель"><PlayerIcon /></TaskButton>
    <TaskButton $open aria-label="Chrome"><ChromeIcon /></TaskButton>
    <TaskButton $open $stacked aria-label="Word"><WordIcon /></TaskButton>
    <TaskButton $open aria-label="PowerPoint"><PowerPointIcon /></TaskButton>
    <Tray>
      <Language>RU</Language>
      <IconButton aria-label="Скрытые значки">
        <Icon w={7} h={4}><path d="M0 4h7L3.500 0z" fill="#fff" /></Icon>
      </IconButton>
      <TrayIcons>
        <TrayFlag />
        <TrayNetwork />
        <TraySound />
      </TrayIcons>
      <Clock>
        13:59
        <br />
        10.03.2022
      </Clock>
      <ShowDesktop aria-label="Показать рабочий стол" />
    </Tray>
  </Taskbar>
);

const App = () => (
  <Window>
    <GlobalStyle />
    <Header />
    <Ribbon>
      <ClipboardGroup />
      <FontGroup />
      <ParagraphGroup />
      <StylesGroup />
      <EditingGroup />
    </Ribbon>
    <Workspace>
      <Left>
        <TabStop aria-label="Табуляция">
          <span>
            <Icon w={7} h={7}><path d="M1 0v6h6" fill="none" stroke="#333" strokeWidth="2" /></Icon>
          </span>
        </TabStop>
        <VerticalRuler>
          <VerticalScale />
        </VerticalRuler>
      </Left>
      <Canvas>
        <Ruler>
          <HorizontalScale />
        </Ruler>
        <Page>
          <LogGraph />
          <PasteOptions>
            <ClipSmallIcon />
            <span>(Ctrl)</span>
            <Arrow color="#333" />
          </PasteOptions>
        </Page>
      </Canvas>
      <Scroll />
    </Workspace>
    <Status />
    <Tasks />
  </Window>
);

export default App;
